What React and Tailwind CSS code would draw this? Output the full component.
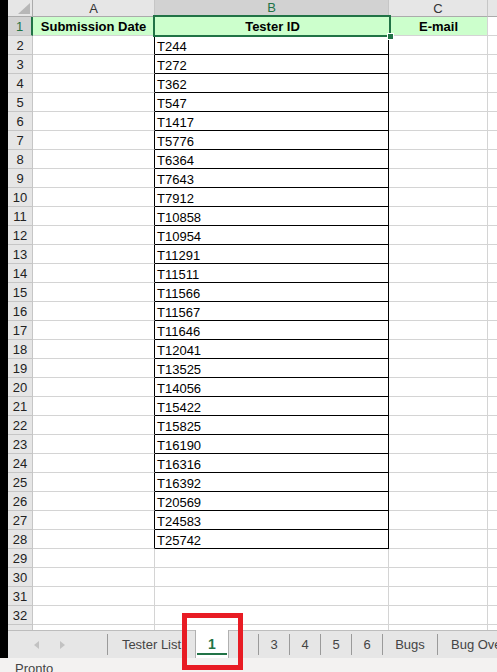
import React from "react";

const ids = [
  "T244", "T272", "T362", "T547", "T1417", "T5776", "T6364", "T7643", "T7912",
  "T10858", "T10954", "T11291", "T11511", "T11566", "T11567", "T11646", "T12041",
  "T13525", "T14056", "T15422", "T15825", "T16190", "T16316", "T16392", "T20569",
  "T24583", "T25742",
];

const font = { fontFamily: '"Liberation Sans", Arial, sans-serif' };

function HeaderRow() {
  return (
    <div className="flex h-[17px] shrink-0 bg-[#e6e6e6] text-[13px] leading-none text-[#333]">
      <div className="relative w-[25px] shrink-0 border-r border-b border-[#ababab]">
        <svg className="absolute right-[2px] bottom-[2px]" width="12" height="11" viewBox="0 0 12 11">
          <polygon points="12,0 12,11 0,11" fill="#b7b7b7" />
        </svg>
      </div>
      <div className="flex w-[122px] shrink-0 items-center justify-center border-r border-b border-[#c6c6c6] border-b-[#ababab]">A</div>
      <div className="flex w-[234px] shrink-0 items-center justify-center border-r border-b-2 border-[#c6c6c6] border-b-[#217346] bg-[#d2d2d2] text-[#217346]">B</div>
      <div className="flex w-[99px] shrink-0 items-center justify-center border-r border-b border-[#c6c6c6] border-b-[#ababab]">C</div>
      <div className="flex-1 border-b border-[#ababab]" />
    </div>
  );
}

function TitleRow() {
  return (
    <div className="flex h-[19px] shrink-0 text-[13px] leading-none">
      <div className="flex w-[25px] shrink-0 items-center justify-center border-r-2 border-b border-[#217346] border-b-[#c6c6c6] bg-[#d2d2d2] text-[#217346]">1</div>
      <div className="flex w-[122px] shrink-0 items-center justify-center border-r border-b border-[#d4d4d4] bg-[#ccffcc] pt-[1px] font-bold text-black">
        Submission Date
      </div>
      <div className="relative flex w-[235px] shrink-0 items-center justify-center border-b border-black bg-[#ccffcc] pt-[1px] font-bold text-black">
        Tester ID
        <div className="absolute -top-[2px] -left-[2px] -right-[1px] -bottom-[2px] border-2 border-[#217346]" />
        <div className="absolute -right-[3px] -bottom-[4px] h-[5px] w-[5px] bg-[#217346] outline outline-1 outline-white" />
      </div>
      <div className="flex w-[98px] shrink-0 items-center justify-center border-r border-b border-[#d4d4d4] bg-[#ccffcc] pt-[1px] font-bold text-black">
        E-mail
      </div>
      <div className="flex-1 border-b border-[#d4d4d4]" />
    </div>
  );
}

function DataRow({ n, id }) {
  const bordered = Boolean(id);
  return (
    <div className="flex h-[19px] shrink-0 text-[13px] leading-none">
      <div className="flex w-[25px] shrink-0 items-center justify-center border-r border-b border-[#c6c6c6] bg-[#e6e6e6] pt-[1px] text-[#222]">{n}</div>
      <div className={bordered ? "w-[122px] shrink-0 border-r border-b border-[#d4d4d4] border-r-black" : "w-[122px] shrink-0 border-r border-b border-[#d4d4d4]"} />
      <div className={bordered ? "flex w-[234px] shrink-0 items-center border-r border-b border-black pl-[2px] pt-[2px] text-black" : "w-[234px] shrink-0 border-r border-b border-[#d4d4d4]"}>
        {id}
      </div>
      <div className="w-[99px] shrink-0 border-r border-b border-[#d4d4d4]" />
      <div className="flex-1 border-b border-[#d4d4d4]" />
    </div>
  );
}

function Sep() {
  return <div className="h-[21px] w-px shrink-0 bg-[#9a9a9a]" />;
}

function Tab({ label, w }) {
  return (
    <div className={`flex h-full shrink-0 items-center justify-center text-[13px] text-[#444] ${w}`}>{label}</div>
  );
}

export default function App() {
  const rows = [];
  for (let n = 2; n <= 33; n++) rows.push(<DataRow key={n} n={n} id={ids[n - 2]} />);

  return (
    <div className="flex h-[672px] w-[497px] flex-col overflow-hidden bg-white" style={font}>
      <div className="flex h-[658px] shrink-0">
        <div className="w-[8px] shrink-0 bg-black" />
        <div className="flex min-w-0 flex-1 flex-col">
          <div className="flex h-[630px] shrink-0 flex-col overflow-hidden">
            <HeaderRow />
            <TitleRow />
            {rows}
          </div>
          <div className="relative flex h-[28px] shrink-0 items-center border-t border-[#bdbdbd] bg-[#e6e6e6]">
            <div className="flex w-[99px] shrink-0 items-center pl-[26px] gap-[21px]">
              <svg width="5" height="8" viewBox="0 0 5 8"><polygon points="5,0 5,8 0,4" fill="#c2c2c2" /></svg>
              <svg width="5" height="8" viewBox="0 0 5 8"><polygon points="0,0 0,8 5,4" fill="#c2c2c2" /></svg>
            </div>
            <Sep />
            <Tab label="Tester List" w="w-[87px]" />
            <div className="relative -mt-px flex h-[28px] w-[34px] shrink-0 items-center justify-center border-x border-[#b0b0b0] bg-white text-[14px] font-bold text-[#217346]">
              1
              <div className="absolute bottom-[3px] left-[1px] right-[1px] h-[2px] bg-[#217346]" />
            </div>
            <Tab label="" w="w-[29px]" />
            <Sep />
            <Tab label="3" w="w-[30px]" />
            <Sep />
            <Tab label="4" w="w-[30px]" />
            <Sep />
            <Tab label="5" w="w-[30px]" />
            <Sep />
            <Tab label="6" w="w-[30px]" />
            <Sep />
            <Tab label="Bugs" w="w-[54px]" />
            <Sep />
            <div className="flex h-full shrink-0 items-center whitespace-nowrap pl-[13px] text-[13px] text-[#444]">Bug Overview</div>
            <div className="pointer-events-none absolute left-[174px] top-[-18px] h-[57px] w-[61px] border-[5px] border-[#e81c24]" />
          </div>
        </div>
      </div>
      <div className="h-[14px] shrink-0 overflow-hidden bg-[#f3f2f1] pl-[15px] pt-[4px] text-[13px] leading-none text-[#444]">
        Pronto
      </div>
    </div>
  );
}
